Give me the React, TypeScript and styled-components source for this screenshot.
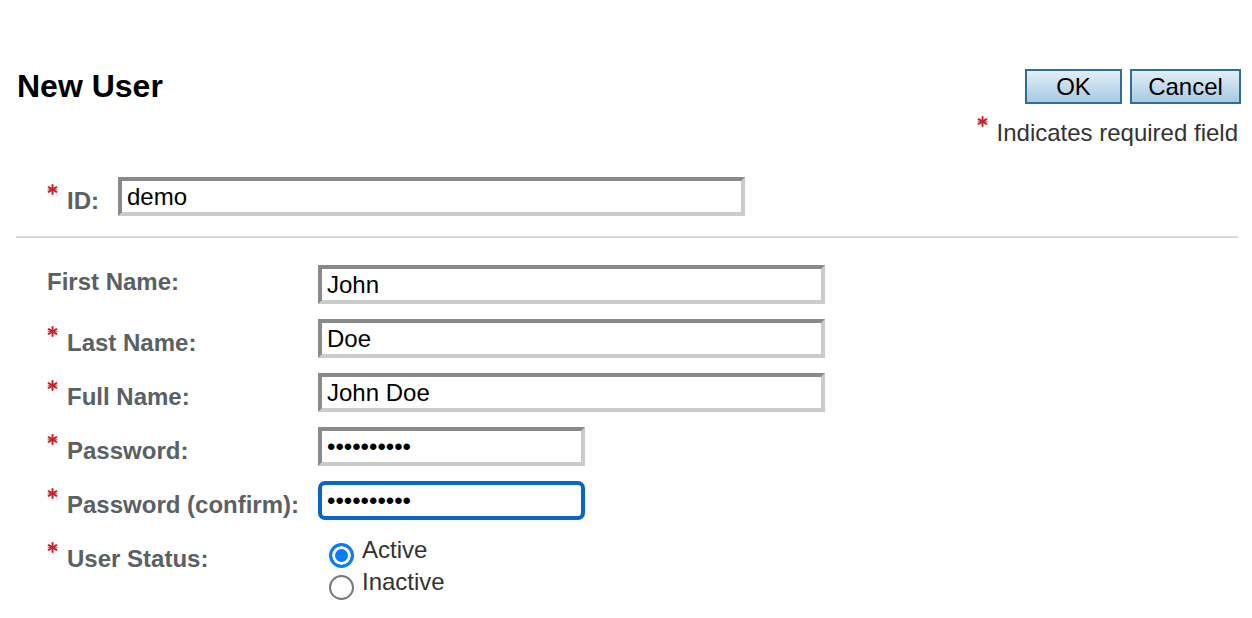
import styled, { createGlobalStyle } from 'styled-components';

const GlobalStyle = createGlobalStyle`
  html, body {
    margin: 0;
    padding: 0;
    background: #fff;
  }
  body {
    font-family: 'Liberation Sans', Arial, Helvetica, sans-serif;
  }
`;

const Page = styled.div`
  width: 1252px;
  min-height: 618px;
  box-sizing: border-box;
  padding: 69px 14px 0 16px;
`;

const TopBar = styled.div`
  display: flex;
  justify-content: space-between;
  align-items: center;
  height: 35px;
`;

const Title = styled.h1`
  margin: 0;
  padding-left: 1px;
  font-size: 32px;
  line-height: 35px;
  font-weight: bold;
  color: #000;
`;

const Actions = styled.div`
  display: flex;
  gap: 8px;
  margin-right: -3px;
`;

const Button = styled.button<{ $width: number }>`
  width: ${(p) => p.$width}px;
  height: 35px;
  padding: 0;
  border: 2px solid #2f6f95;
  background: linear-gradient(#e3eef7, #a6cae3);
  font-family: 'Liberation Sans', Arial, sans-serif;
  font-size: 24px;
  color: #000;
  cursor: pointer;
`;

const RequiredNote = styled.div`
  margin-top: 15px;
  display: flex;
  justify-content: flex-end;
  align-items: flex-start;
  font-size: 24px;
  line-height: 28px;
  color: #333;
`;

const IdRow = styled.div`
  margin-top: 30px;
  padding-left: 31px;
  display: flex;
  align-items: flex-start;
`;

const Separator = styled.hr`
  margin: 20px 0 0;
  border: 0;
  height: 2px;
  background: #dadada;
`;

const FormGrid = styled.div`
  margin-top: 27px;
  padding-left: 31px;
  display: grid;
  grid-template-columns: 271px auto;
  row-gap: 15px;
  justify-items: start;
`;

const Label = styled.label<{ $required?: boolean; $width?: number }>`
  display: flex;
  align-items: flex-start;
  box-sizing: border-box;
  width: ${(p) => (p.$width ? `${p.$width}px` : 'auto')};
  padding-top: ${(p) => (p.$required ? 10 : 3)}px;
  font-size: 24px;
  line-height: 28px;
  font-weight: bold;
  color: #5b6065;
  white-space: nowrap;
`;

const Mark = styled.svg`
  flex: none;
  width: 11px;
  height: 11px;
  margin: -3px 9px 0 0;
`;

const TextInput = styled.input<{ $width: number; $focused?: boolean }>`
  box-sizing: border-box;
  width: ${(p) => p.$width}px;
  height: 39px;
  padding: 0 5px;
  margin: 0;
  font-family: 'Liberation Sans', Arial, sans-serif;
  font-size: 24px;
  color: #000;
  background: #fff;
  outline: none;
  border: 4px solid;
  border-color: ${(p) => (p.$focused ? '#0b64c9' : '#8a8a8a #cbcbcb #cbcbcb #8a8a8a')};
  border-radius: ${(p) => (p.$focused ? '7px' : '0')};
`;

const RadioGroup = styled.div`
  margin-top: -1px;
  display: flex;
  flex-direction: column;
`;

const RadioOption = styled.label`
  display: flex;
  align-items: flex-start;
  padding-left: 11px;
  font-size: 24px;
  line-height: 32px;
  color: #333;
`;

const Radio = styled.input`
  appearance: none;
  flex: none;
  box-sizing: border-box;
  width: 25px;
  height: 25px;
  margin: 9px 8px -2px 0;
  border-radius: 50%;
  border: 2px solid #777;
  background: #fff;
  &:checked {
    border: 3px solid #0b7cf7;
    background: #0b7cf7;
    box-shadow: inset 0 0 0 3px #fff;
  }
`;

function RequiredMark() {
  return (
    <Mark viewBox="0 0 11 11" aria-hidden="true">
      <line x1="0.6" y1="5.5" x2="10.4" y2="5.5" stroke="#e06a72" strokeWidth="1.3" />
      <g stroke="#cc1f2a" strokeWidth="2" strokeLinecap="round">
        <line x1="5.5" y1="1" x2="5.5" y2="10" />
        <line x1="1.6" y1="3.2" x2="9.4" y2="7.8" />
        <line x1="1.6" y1="7.8" x2="9.4" y2="3.2" />
      </g>
    </Mark>
  );
}

type Field = {
  label: string;
  value: string;
  width: number;
  required?: boolean;
  type?: string;
  focused?: boolean;
};

const fields: Field[] = [
  { label: 'First Name:', value: 'John', width: 507 },
  { label: 'Last Name:', value: 'Doe', width: 507, required: true },
  { label: 'Full Name:', value: 'John Doe', width: 507, required: true },
  { label: 'Password:', value: 'johndoe123', width: 267, required: true, type: 'password' },
  { label: 'Password (confirm):', value: 'johndoe123', width: 267, required: true, type: 'password', focused: true },
];

export default function App() {
  return (
    <>
      <GlobalStyle />
      <Page>
        <TopBar>
          <Title>New User</Title>
          <Actions>
            <Button $width={97}>OK</Button>
            <Button $width={111}>Cancel</Button>
          </Actions>
        </TopBar>
        <RequiredNote>
          <RequiredMark />
          Indicates required field
        </RequiredNote>
        <IdRow>
          <Label $required $width={71}>
            <RequiredMark />
            ID:
          </Label>
          <TextInput $width={627} defaultValue="demo" />
        </IdRow>
        <Separator />
        <FormGrid>
          {fields.map((f) => [
            <Label key={f.label + '-l'} $required={f.required}>
              {f.required && <RequiredMark />}
              {f.label}
            </Label>,
            <TextInput
              key={f.label + '-i'}
              $width={f.width}
              $focused={f.focused}
              type={f.type || 'text'}
              defaultValue={f.value}
            />,
          ])}
          <Label $required>
            <RequiredMark />
            User Status:
          </Label>
          <RadioGroup>
            <RadioOption>
              <Radio type="radio" name="status" defaultChecked />
              Active
            </RadioOption>
            <RadioOption>
              <Radio type="radio" name="status" />
              Inactive
            </RadioOption>
          </RadioGroup>
        </FormGrid>
      </Page>
    </>
  );
}
